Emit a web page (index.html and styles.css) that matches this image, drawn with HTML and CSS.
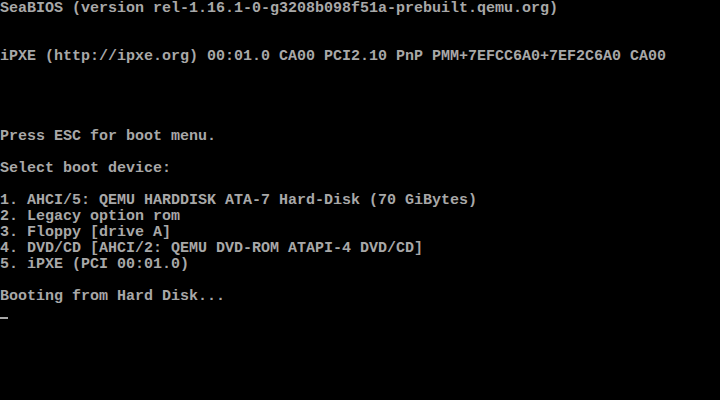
FILE: index.html
```html
<!DOCTYPE html>
<html>
<head>
<meta charset="utf-8">
<link rel="stylesheet" href="styles.css">
</head>
<body>
<div class="screen">
<div class="line">SeaBIOS (version rel-1.16.1-0-g3208b098f51a-prebuilt.qemu.org)</div>
<div class="line"> </div>
<div class="line"> </div>
<div class="line">iPXE (http://ipxe.org) 00:01.0 CA00 PCI2.10 PnP PMM+7EFCC6A0+7EF2C6A0 CA00</div>
<div class="line"> </div>
<div class="line"> </div>
<div class="line"> </div>
<div class="line"> </div>
<div class="line">Press ESC for boot menu.</div>
<div class="line"> </div>
<div class="line">Select boot device:</div>
<div class="line"> </div>
<div class="line">1. AHCI/5: QEMU HARDDISK ATA-7 Hard-Disk (70 GiBytes)</div>
<div class="line">2. Legacy option rom</div>
<div class="line">3. Floppy [drive A]</div>
<div class="line">4. DVD/CD [AHCI/2: QEMU DVD-ROM ATAPI-4 DVD/CD]</div>
<div class="line">5. iPXE (PCI 00:01.0)</div>
<div class="line"> </div>
<div class="line">Booting from Hard Disk...</div>
<div class="line"><span class="cursor"></span></div>
</div>
</body>
</html>
```
FILE: styles.css
```css
html, body {
  margin: 0;
  padding: 0;
  background: #000;
}
.screen {
  width: 720px;
  height: 400px;
  background: #000;
  color: #a8a8a8;
  font-family: "Liberation Mono", "DejaVu Sans Mono", monospace;
  font-size: 15px;
  font-weight: bold;
  overflow: hidden;
  padding-top: 1px;
  box-sizing: border-box;
}
.line {
  height: 16px;
  line-height: 16px;
  white-space: pre;
}
.cursor {
  display: inline-block;
  width: 8px;
  height: 2px;
  background: #a8a8a8;
  vertical-align: top;
  margin-top: 12px;
}
```
